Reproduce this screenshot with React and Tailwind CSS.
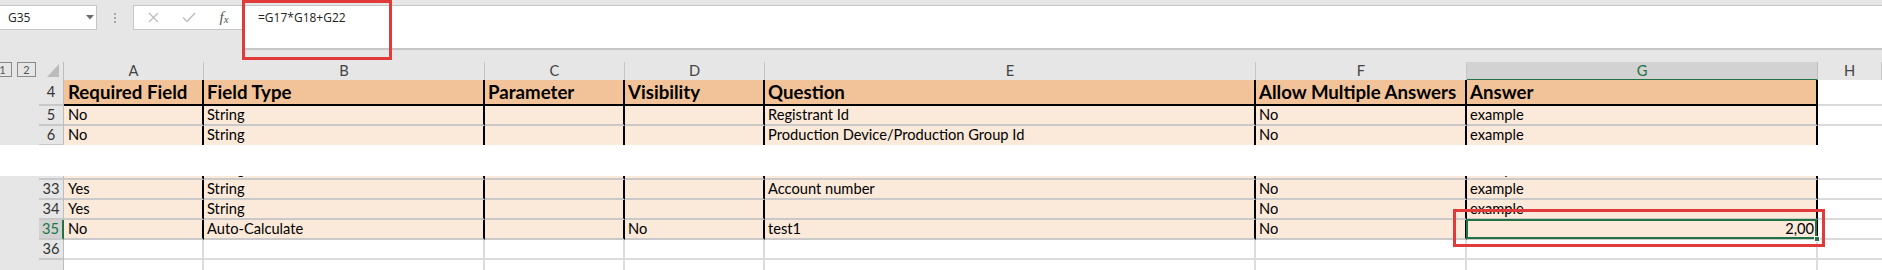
import React from 'react';

const GRID = 'grid grid-cols-[39px_25px_140px_281px_140px_140px_491px_211px_351px_1fr]';
const LETTERS = ['A', 'B', 'C', 'D', 'E', 'F', 'G', 'H'];

const HEADERS = ['Required Field', 'Field Type', 'Parameter', 'Visibility', 'Question', 'Allow Multiple Answers', 'Answer'];

const ROWS = [
  { n: 5, v: ['No', 'String', '', '', 'Registrant Id', 'No', 'example'] },
  { n: 6, v: ['No', 'String', '', '', 'Production Device/Production Group Id', 'No', 'example'] },
  { n: '', v: ['', 'String', '', '', '', '', 'example'] },
  { n: 33, v: ['Yes', 'String', '', '', 'Account number', 'No', 'example'] },
  { n: 34, v: ['Yes', 'String', '', '', '', 'No', 'example'] },
  { n: 35, v: ['No', 'Auto-Calculate', '', 'No', 'test1', 'No', '2,00'], selected: true },
];

function RowHead({ n, h, selected }) {
  return (
    <>
      <div className="bg-[#e6e6e6]" />
      <div
        className={`${h} flex items-center justify-center border-b-2 border-b-[#c8c8c8] text-[14.67px] ${
          selected
            ? 'bg-[#d2d2d2] text-[#217346] border-r-2 border-r-[#217346]'
            : 'bg-[#e6e6e6] text-[#333] border-r border-r-[#bdbdbd]'
        }`}
      >
        {n}
      </div>
    </>
  );
}

function DataRow({ n, v, selected, noBottom }) {
  return (
    <div className={`${GRID} h-[20px]`}>
      <RowHead n={n} h="h-[20px]" selected={selected} />
      {v.map((t, i) => {
        const isAnswer = selected && i === 6;
        return (
          <div
            key={i}
            className={`h-[20px] bg-[#fbe9da] border-r-2 border-r-black ${
              noBottom ? '' : 'border-b-2 border-b-[#c9c9c9]'
            } text-[14.67px] leading-[18px] text-black whitespace-nowrap ${
              i === 0 ? 'pl-[4px]' : 'pl-[3px]'
            } ${isAnswer ? 'relative text-right pr-[2px]' : 'overflow-hidden'}`}
          >
            {t}
            {isAnswer && (
              <>
                <div className="absolute left-[-1px] top-[-1px] right-[-1px] bottom-[-1px] border-2 border-[#217346]" />
                <div className="absolute right-[-4px] bottom-[-4px] w-[6px] h-[6px] bg-[#217346] border border-white" />
                <div className="absolute left-[-14px] top-[-11px] right-[-9px] bottom-[-9px] border-[3px] border-[#e03a3a] z-10" />
              </>
            )}
          </div>
        );
      })}
      <div className={`h-[20px] bg-white ${noBottom ? '' : 'border-b-2 border-b-[#dadada]'}`} />
    </div>
  );
}

function EmptyRow({ n }) {
  return (
    <div className={`${GRID} h-[20px]`}>
      <RowHead n={n} h="h-[20px]" />
      {[0, 1, 2, 3, 4, 5, 6].map((i) => (
        <div key={i} className="h-[20px] bg-white border-r-2 border-r-[#dcdcdc] border-b-2 border-b-[#dcdcdc]" />
      ))}
      <div className="h-[20px] bg-white border-b-2 border-b-[#dcdcdc]" />
    </div>
  );
}

function FormulaBar() {
  return (
    <div className="relative h-[62px] bg-[#e6e6e6] font-['Open_Sans',sans-serif]">
      <div className="flex pt-[5px]">
        <div className="w-[97px] h-[25px] bg-white border border-l-0 border-[#c6c6c6] flex items-center justify-between pl-[8px] pr-[2px] text-[12px] text-[#222]">
          <span>G35</span>
          <svg width="8" height="5" viewBox="0 0 8 5">
            <polygon points="0,0 8,0 4,4.5" fill="#6b6b6b" />
          </svg>
        </div>
        <div className="w-[36px] h-[25px] flex flex-col items-center justify-center gap-[2px]">
          <div className="w-[2px] h-[2px] bg-[#a8a8a8]" />
          <div className="w-[2px] h-[2px] bg-[#a8a8a8]" />
          <div className="w-[2px] h-[2px] bg-[#a8a8a8]" />
        </div>
        <div className="w-[110px] h-[25px] bg-white border border-[#c6c6c6] flex items-center">
          <div className="w-[38px] flex justify-center">
            <svg width="11" height="11" viewBox="0 0 11 11">
              <path d="M1 1 L10 10 M10 1 L1 10" stroke="#bdbdbd" strokeWidth="1.3" />
            </svg>
          </div>
          <div className="w-[34px] flex justify-center">
            <svg width="14" height="11" viewBox="0 0 14 11">
              <path d="M1 5.5 L5 9.5 L13 1" stroke="#bdbdbd" strokeWidth="1.4" fill="none" />
            </svg>
          </div>
          <div className="w-[36px] text-center font-['Liberation_Serif',serif] italic text-[15px] text-[#555] leading-[15px]">
            f<span className="text-[11px] relative top-[1px]">x</span>
          </div>
        </div>
        <div className="flex-1 h-[45px] bg-white border-t border-b-2 border-[#c6c6c6] pl-[15px] pt-[4px] text-[12px] leading-[16px] text-[#222]">
          =G17*G18+G22
        </div>
      </div>
      <div className="absolute left-[242px] top-0 w-[150px] h-[60px] border-[3px] border-[#e03a3a] z-10" />
    </div>
  );
}

function ColumnHeaders() {
  return (
    <div className={`${GRID} h-[18px] bg-[#e6e6e6] text-[14.67px] leading-[17px]`}>
      <div className="flex items-start">
        <div className="ml-[-7px] w-[19px] h-[15px] border border-[#8a8a8a] flex items-center justify-center text-[11px] text-[#555]">1</div>
        <div className="ml-[5px] w-[19px] h-[15px] border border-[#8a8a8a] flex items-center justify-center text-[11px] text-[#555]">2</div>
      </div>
      <div className="flex items-end justify-end pr-[4px] pb-[3px] border-b border-b-[#ababab] border-r border-r-[#bdbdbd]">
        <svg width="12" height="13" viewBox="0 0 12 13">
          <polygon points="12,0 12,13 0,13" fill="#bcbcbc" />
        </svg>
      </div>
      {LETTERS.map((l) =>
        l === 'G' ? (
          <div key={l} className="bg-[#d2d2d2] text-[#217346] text-center border-b-2 border-b-[#217346] border-r border-r-[#bdbdbd]">
            {l}
          </div>
        ) : (
          <div key={l} className="text-[#444] text-center border-b border-b-[#ababab] border-r border-r-[#c6c6c6]">
            {l}
          </div>
        )
      )}
    </div>
  );
}

export default function App() {
  return (
    <div className="w-[1882px] h-[270px] overflow-hidden bg-white font-['Lato',sans-serif]">
      <FormulaBar />
      <ColumnHeaders />

      <div className={`${GRID} h-[26px]`}>
        <RowHead n={4} h="h-[26px]" />
        {HEADERS.map((t, i) => (
          <div
            key={i}
            className={`h-[26px] bg-[#f2c398] border-r-2 border-b-2 border-black text-[18.67px] font-bold leading-[24px] text-black whitespace-nowrap overflow-hidden ${
              i === 0 ? 'pl-[4px]' : 'pl-[3px]'
            }`}
          >
            {t}
          </div>
        ))}
        <div className="h-[26px] bg-white border-b-2 border-b-[#dadada]" />
      </div>

      <DataRow {...ROWS[0]} />
      <div className="h-[19px] overflow-hidden">
        <DataRow {...ROWS[1]} noBottom />
      </div>

      <div className="h-[31px] bg-white" />

      <div className="h-[4px] overflow-hidden flex flex-col justify-end">
        <DataRow {...ROWS[2]} />
      </div>
      <DataRow {...ROWS[3]} />
      <DataRow {...ROWS[4]} />
      <DataRow {...ROWS[5]} />
      <EmptyRow n={36} />
      <div className="h-[10px] overflow-hidden">
        <EmptyRow n="" />
      </div>
    </div>
  );
}
